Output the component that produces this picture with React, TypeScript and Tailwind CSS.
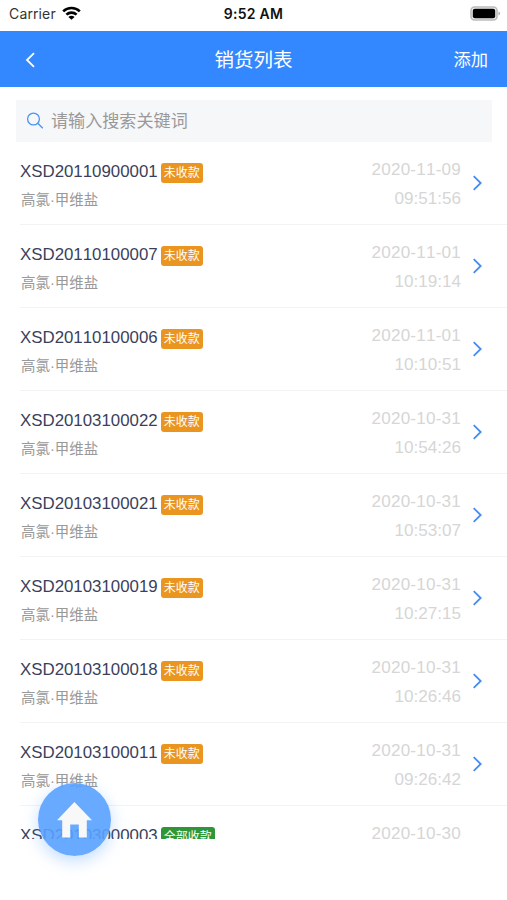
import React from "react";

type Order = { id: string; date: string; time: string; paid?: boolean };

const orders: Order[] = [
  { id: "XSD20110900001", date: "2020-11-09", time: "09:51:56" },
  { id: "XSD20110100007", date: "2020-11-01", time: "10:19:14" },
  { id: "XSD20110100006", date: "2020-11-01", time: "10:10:51" },
  { id: "XSD20103100022", date: "2020-10-31", time: "10:54:26" },
  { id: "XSD20103100021", date: "2020-10-31", time: "10:53:07" },
  { id: "XSD20103100019", date: "2020-10-31", time: "10:27:15" },
  { id: "XSD20103100018", date: "2020-10-31", time: "10:26:46" },
  { id: "XSD20103100011", date: "2020-10-31", time: "09:26:42" },
  { id: "XSD20103000003", date: "2020-10-30", time: "", paid: true },
];

function StatusBar() {
  return (
    <div className="grid h-[31px] shrink-0 grid-cols-3 items-center px-[8px] pb-[4px] text-[#111]">
      <div className="ml-px flex items-center gap-[6px]">
        <span className="font-['Inter'] text-[14px] leading-[20px] tracking-[0.2px] text-[#333]">Carrier</span>
        <svg className="mt-[-2px]" width="19" height="14" viewBox="0 0 19 14" fill="none" stroke="#000" strokeWidth="2.6">
          <path d="M1.2 5.4C5.8.9 13.2.9 17.8 5.4" />
          <path d="M4.4 8.6c2.9-2.7 7.3-2.7 10.2 0" />
          <path d="M9.5 13.8 6.4 10.9c1.7-1.5 4.5-1.5 6.2 0Z" fill="#000" stroke="none" />
        </svg>
      </div>
      <div className="text-center font-['Inter'] text-[14px] leading-[20px] font-semibold tracking-[0.3px]">9:52 AM</div>
      <svg className="mr-[-2px] justify-self-end" width="31" height="15" viewBox="0 0 31 15">
        <rect x="1" y="1" width="26" height="13" rx="3.5" fill="#eee" stroke="#bcbcbc" strokeWidth="1.6" />
        <rect x="2.8" y="2.8" width="22.4" height="9.4" rx="2" fill="#000" />
        <path d="M28.5 5.5c2 .7 2 3.3 0 4Z" fill="#aaa" />
      </svg>
    </div>
  );
}

function OrderRow({ order }: { order: Order }) {
  return (
    <li className="ml-5 flex h-[83px] shrink-0 border-b border-[#f3f3f3] pr-[24px]">
      <div className="flex-1 pt-[18px]">
        <div className="flex h-[24px] items-center gap-[3px]">
          <span className="text-[16.85px] leading-[24px] text-[#3a3f5c]">{order.id}</span>
          <span
            className={`mt-[2px] flex h-[20px] items-center rounded-[3px] px-[3px] pb-px text-[12px] text-white ${
              order.paid ? "bg-[#2f9637]" : "bg-[#ea951f]"
            }`}
          >
            {order.paid ? "全部收款" : "未收款"}
          </span>
        </div>
        <div className="mt-[6px] ml-px text-[14.5px] leading-[20px] text-[#999]">高氯·甲维盐</div>
      </div>
      <div className="pt-[13px] text-right text-[17.1px] leading-[29px] text-[#d6d6d6]">
        <div className="tracking-[0.2px]">{order.date}</div>
        <div>{order.time}</div>
      </div>
      <svg className="mt-[33px] ml-[11px]" width="11" height="16" viewBox="0 0 11 16" fill="none" stroke="#438cf2" strokeWidth="1.8">
        <path d="m1.7 1.2 7 6.8-7 6.8" />
      </svg>
    </li>
  );
}

export default function App() {
  return (
    <div className="relative flex h-[900px] w-[507px] flex-col overflow-hidden bg-white font-['Liberation_Sans','Noto_Sans_CJK_SC',sans-serif] [font-kerning:none]">
      <StatusBar />
      <header className="grid h-[56px] shrink-0 grid-cols-3 items-center bg-[#3388ff] px-[19px] text-white">
        <svg className="mt-px ml-[6px]" width="11" height="16" viewBox="0 0 11 16" fill="none" stroke="#fff" strokeWidth="1.8">
          <path d="M9 1.2 2 8l7 6.8" />
        </svg>
        <h1 className="pt-[2px] text-center text-[19.5px] leading-[28px]">销货列表</h1>
        <span className="pt-[2px] text-right text-[17.3px] leading-[24px]">添加</span>
      </header>
      <div className="mr-[15px] ml-[16px] mt-[13px] flex h-[42px] shrink-0 items-center gap-[7px] bg-[#f6f7f9] pl-[10px]">
        <svg width="18" height="18" viewBox="0 0 18 18" fill="none" stroke="#4c94f5" strokeWidth="1.3">
          <circle cx="7.5" cy="7" r="5.9" />
          <path d="m11.8 11.3 5 5" />
        </svg>
        <span className="pt-px text-[17.1px] leading-[24px] text-[#999]">请输入搜索关键词</span>
      </div>
      <ul className="flex h-[697px] shrink-0 flex-col overflow-hidden">
        {orders.map((order) => (
          <OrderRow key={order.id} order={order} />
        ))}
      </ul>
      <button
        aria-label="首页"
        className="absolute top-[783px] left-[38px] flex size-[73px] items-center justify-center rounded-full bg-[#58a1ff]/90 shadow-[0_5px_16px_rgba(64,150,255,0.32)]"
      >
        <svg width="35" height="36" viewBox="0 0 35 36" fill="#f8f8f8">
          <path d="M17.4 0 35 18.3h-5.2V35.5h-8V22.5h-8.6v13h-8V18.3H0Z" />
        </svg>
      </button>
    </div>
  );
}
